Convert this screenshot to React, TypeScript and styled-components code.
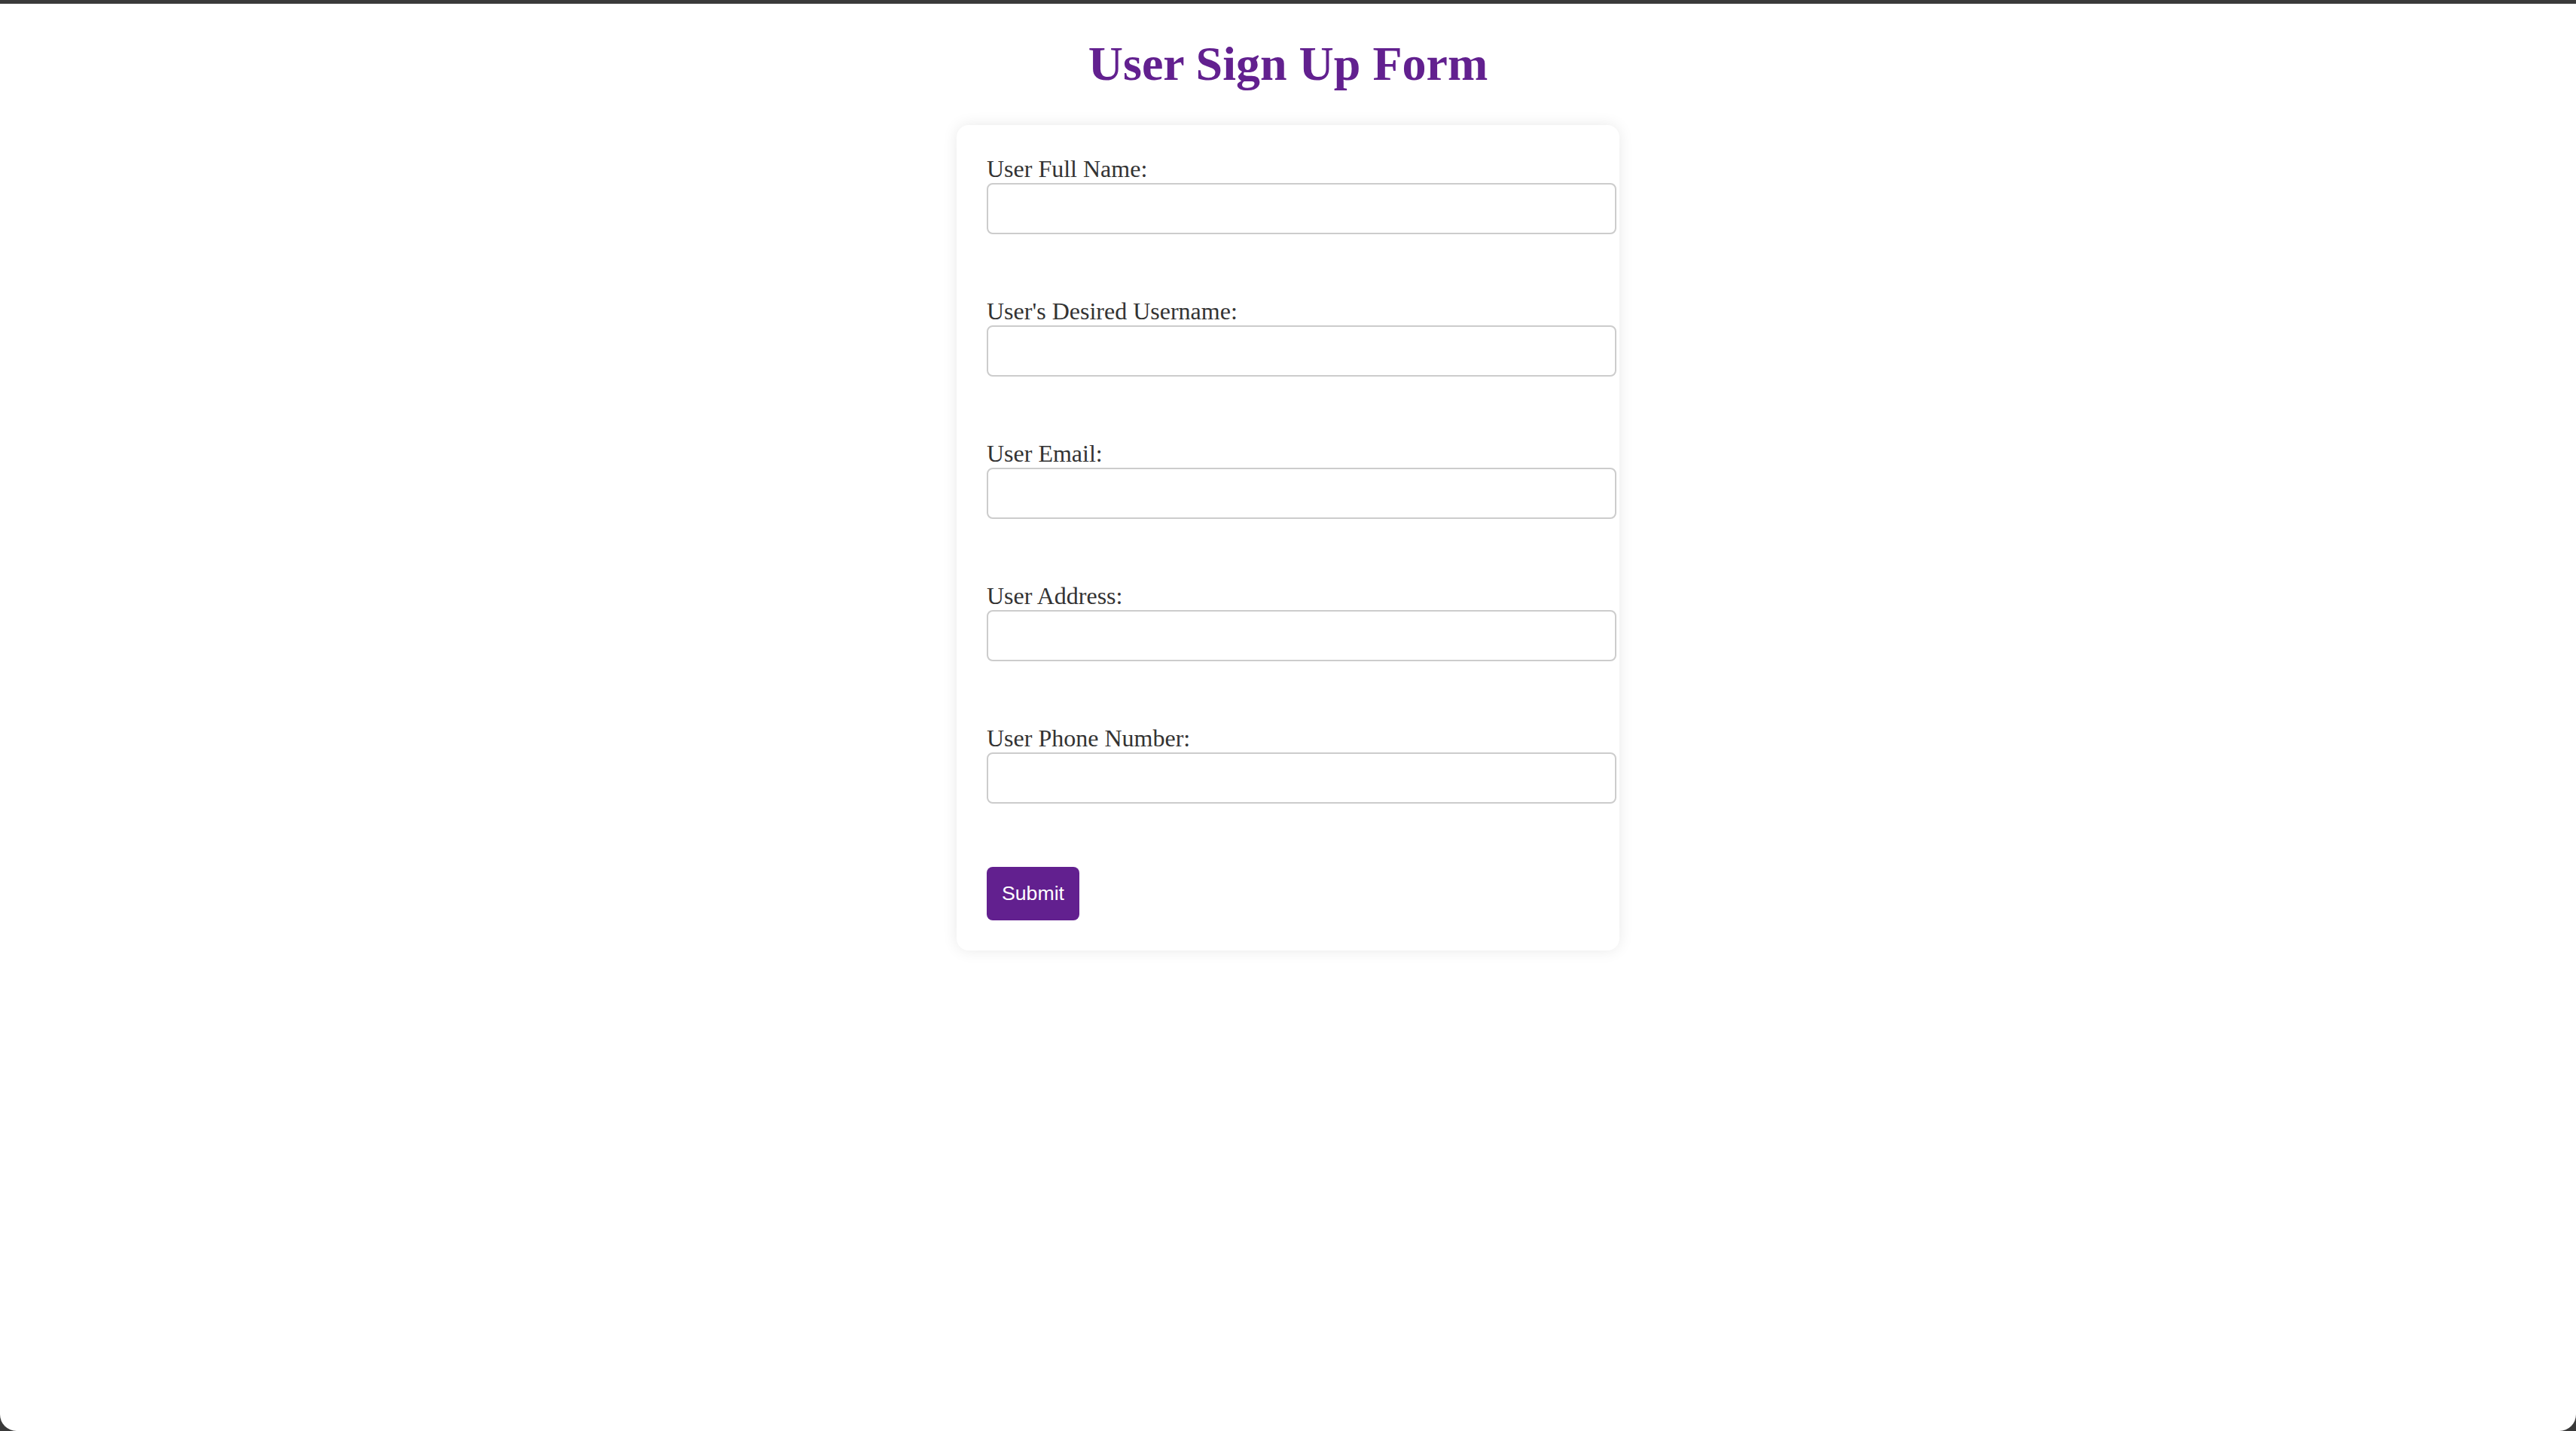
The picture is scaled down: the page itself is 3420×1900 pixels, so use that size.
import styled, { createGlobalStyle } from "styled-components";

const purple = "#62208f";
const labelGrey = "#333333";
const borderGrey = "#cccccc";

const GlobalStyle = createGlobalStyle`
  html, body {
    margin: 0;
    padding: 0;
    background-color: #3a3a3a;
  }
`;

const Frame = styled.div`
  display: flex;
  flex-direction: column;
  align-items: center;
  margin-top: 5px;
  height: calc(100vh - 5px);
  background-color: #ffffff;
  border-radius: 0 0 22px 22px;
  font-family: "Liberation Serif", "Times New Roman", serif;
`;

const Title = styled.h1`
  margin: 43px 0 44px;
  font-size: 64px;
  line-height: 74px;
  font-weight: 700;
  color: ${purple};
  text-align: center;
`;

const Card = styled.form`
  width: 800px;
  padding: 40px;
  background-color: #ffffff;
  border-radius: 16px;
  box-shadow: 0 0 20px rgba(0, 0, 0, 0.09);
`;

const FieldGroup = styled.div`
  margin-bottom: 84px;
`;

const Label = styled.label`
  display: block;
  font-size: 32px;
  line-height: 37px;
  color: ${labelGrey};
`;

const Input = styled.input`
  display: block;
  width: 100%;
  height: 32px;
  margin: 0;
  padding: 16px;
  border: 2px solid ${borderGrey};
  border-radius: 8px;
  background-color: #ffffff;
  font-size: 26px;
  font-family: "Liberation Sans", Arial, sans-serif;
  outline: none;
`;

const SubmitButton = styled.button`
  display: block;
  padding: 20px;
  border: none;
  border-radius: 8px;
  background-color: ${purple};
  color: #ffffff;
  font-family: "Liberation Sans", Arial, sans-serif;
  font-size: 26.67px;
  line-height: 31px;
  cursor: pointer;
`;

const fields = [
  { id: "fullName", label: "User Full Name:", type: "text" },
  { id: "username", label: "User's Desired Username:", type: "text" },
  { id: "email", label: "User Email:", type: "email" },
  { id: "address", label: "User Address:", type: "text" },
  { id: "phone", label: "User Phone Number:", type: "tel" },
];

const App = (): JSX.Element => {
  return (
    <>
      <GlobalStyle />
      <Frame>
        <Title>User Sign Up Form</Title>

        <Card onSubmit={(e) => e.preventDefault()}>
          {fields.map((field) => (
            <FieldGroup key={field.id}>
              <Label htmlFor={field.id}>{field.label}</Label>
              <Input id={field.id} name={field.id} type={field.type} />
            </FieldGroup>
          ))}

          <SubmitButton type="submit">Submit</SubmitButton>
        </Card>
      </Frame>
    </>
  );
};

export default App;
